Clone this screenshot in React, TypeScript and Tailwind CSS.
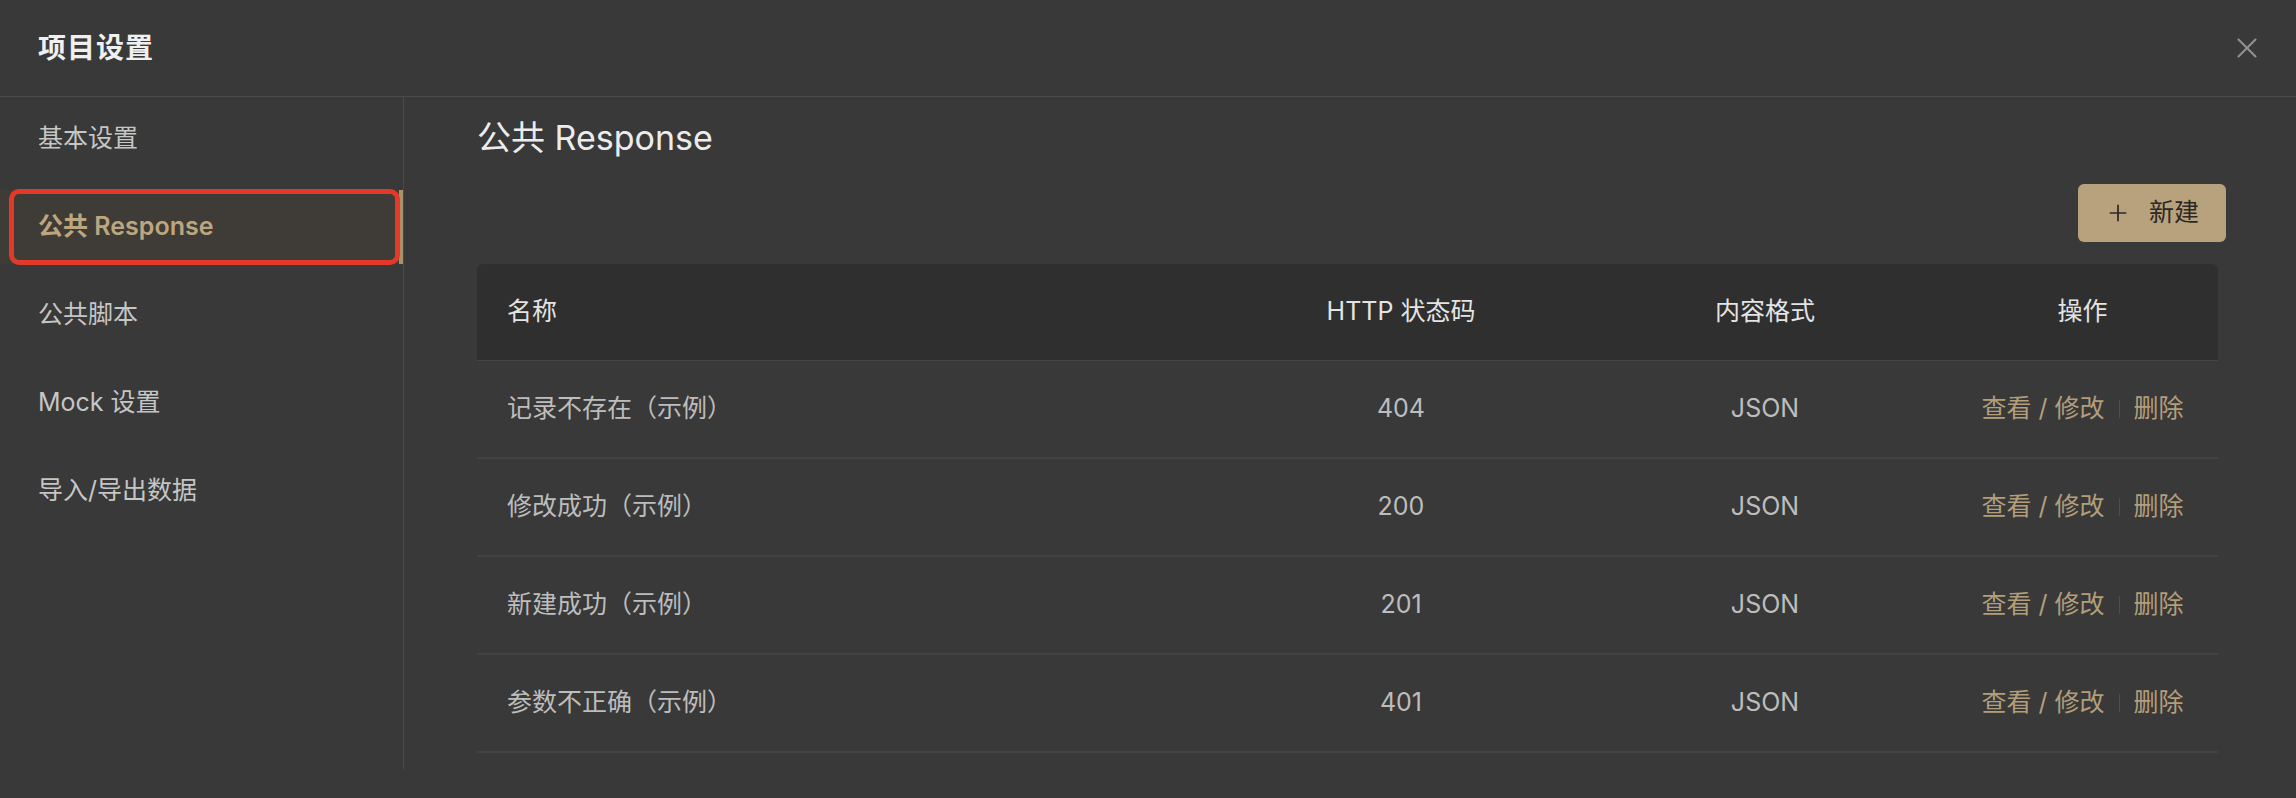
import { X, Plus } from "lucide-react";

const MENU = ["基本设置", "公共 Response", "公共脚本", "Mock 设置", "导入/导出数据"];

const ROWS = [
  { name: "记录不存在（示例）", code: "404", format: "JSON" },
  { name: "修改成功（示例）", code: "200", format: "JSON" },
  { name: "新建成功（示例）", code: "201", format: "JSON" },
  { name: "参数不正确（示例）", code: "401", format: "JSON" },
];

function Actions() {
  return (
    <div className="flex items-center justify-center text-[25px] text-[#b39e7a]">
      <span>查看 / 修改</span>
      <span className="mx-[14px] h-[18px] w-px bg-[#4e4e4e]" />
      <span>删除</span>
    </div>
  );
}

export default function App() {
  return (
    <div className="h-[798px] w-[2296px] overflow-hidden bg-[#393939] font-['Inter','Noto_Sans_CJK_SC',sans-serif] text-[#c9c9c9]">
      {/* header */}
      <div className="flex h-[97px] items-center justify-between border-b border-[#4b4b4b] pl-[38px] pr-[32px]">
        <span className="text-[28px] font-semibold tracking-[1px] text-[#f0f0f0]">项目设置</span>
        <X size={34} strokeWidth={1.5} className="text-[#8f8f8f]" />
      </div>

      <div className="flex">
        {/* sidebar */}
        <div className="flex h-[672px] w-[404px] flex-col gap-[14px] border-r border-[#4a4a4a] pt-[5px]">
          {MENU.map((m, i) =>
            i === 1 ? (
              <div
                key={m}
                className="relative flex h-[74px] items-center border-r-[4px] border-[#a8926c] bg-[#3f3b36] pl-[38px] text-[25px] font-semibold text-[#bba67f]"
              >
                {m}
                <div className="pointer-events-none absolute bottom-[-1px] left-[9px] right-[-1px] top-[-1px] rounded-[10px] border-[5px] border-[#e2392b]" />
              </div>
            ) : (
              <div key={m} className="flex h-[74px] items-center pl-[38px] text-[25px] text-[#c6c6c6]">
                {m}
              </div>
            )
          )}
        </div>

        {/* content */}
        <div className="flex flex-1 flex-col pl-[73px] pr-[70px] pt-[17px]">
          <h1 className="text-[34px] leading-[48px] text-[#ececec]">公共 Response</h1>

          <div className="mt-[22px] flex justify-end">
            <button
              type="button"
              className="flex h-[58px] w-[148px] items-center justify-center gap-[18px] rounded-[6px] bg-[#b8a27e] text-[25px] text-[#2b2926]"
            >
              <Plus size={26} strokeWidth={1.6} />
              新建
            </button>
          </div>

          <div className="mr-[8px] mt-[22px]">
            <div className="grid h-[97px] grid-cols-[742px_364px_364px_1fr] items-center rounded-t-[6px] border-b border-[#454545] bg-[#2f2f2f] text-[25px] text-[#e4e4e4]">
              <span className="pl-[30px]">名称</span>
              <span className="text-center">HTTP 状态码</span>
              <span className="text-center">内容格式</span>
              <span className="text-center">操作</span>
            </div>
            {ROWS.map((r) => (
              <div
                key={r.name}
                className="grid h-[98px] grid-cols-[742px_364px_364px_1fr] items-center border-b-2 border-[#424242] text-[25px] text-[#bdbdbd]"
              >
                <span className="pl-[30px]">{r.name}</span>
                <span className="text-center">{r.code}</span>
                <span className="text-center">{r.format}</span>
                <Actions />
              </div>
            ))}
          </div>
        </div>
      </div>
    </div>
  );
}
